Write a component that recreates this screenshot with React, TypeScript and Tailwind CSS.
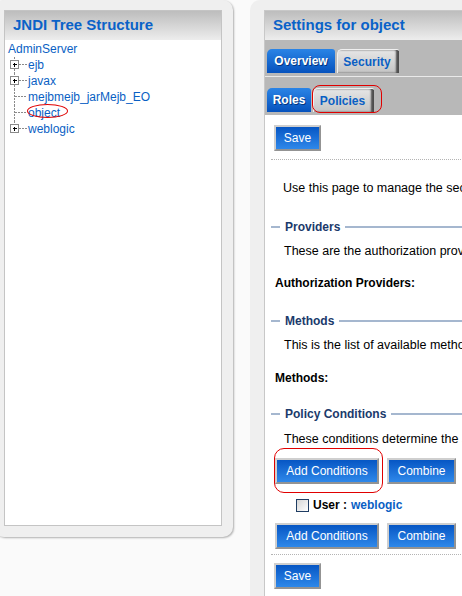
import React from 'react';

const font = "font-['Liberation_Sans',Arial,sans-serif]";

function TreeConnector({ plus, last }: { plus?: boolean; last?: boolean }) {
  return (
    <svg width="20" height="16" viewBox="0 0 20 16" shapeRendering="crispEdges" className="shrink-0">
      {plus ? (
        <>
          <line x1="6.5" y1="0" x2="6.5" y2="3" stroke="#8a8a8a" strokeDasharray="2 1" />
          {!last && <line x1="6.5" y1="12" x2="6.5" y2="16" stroke="#8a8a8a" strokeDasharray="2 1" />}
          <rect x="2.5" y="3.5" width="8" height="8" fill="#fff" stroke="#8a8a8a" />
          <line x1="4.5" y1="7.5" x2="9" y2="7.5" stroke="#000" />
          <line x1="6.5" y1="5.5" x2="6.5" y2="10" stroke="#000" />
          <line x1="11" y1="7.5" x2="19" y2="7.5" stroke="#8a8a8a" strokeDasharray="2 1" />
        </>
      ) : (
        <>
          <line x1="6.5" y1="0" x2="6.5" y2={last ? 8 : 16} stroke="#8a8a8a" strokeDasharray="2 1" />
          <line x1="7" y1="7.5" x2="19" y2="7.5" stroke="#8a8a8a" strokeDasharray="2 1" />
        </>
      )}
    </svg>
  );
}

function Btn({ label, w }: { label: string; w: string }) {
  return (
    <button
      className={`${w} h-[26px] shrink-0 border-2 border-t-[#cfcfcf] border-l-[#cfcfcf] border-r-[#939393] border-b-[#939393] bg-gradient-to-b from-[#0656c4] to-[#2e88ea] text-white text-[12px] leading-none`}
    >
      {label}
    </button>
  );
}

function Legend({ title }: { title: string }) {
  return (
    <div className="flex items-center h-[16px]">
      <div className="w-[9px] h-[2px] bg-[#a5b7cf]" />
      <span className="px-[5px] font-bold text-[12px] text-[#1b3a6b] whitespace-nowrap">{title}</span>
      <div className="flex-1 h-[2px] bg-[#a5b7cf]" />
    </div>
  );
}

function BlueTab({ label, w }: { label: string; w: string }) {
  return (
    <div
      className={`${w} h-[24px] flex items-center justify-center rounded-tl-[5px] rounded-tr-[3px] bg-gradient-to-b from-[#2a84e6] to-[#0652bd] text-white font-bold text-[12px] [text-shadow:1px_1px_0_#04367f]`}
    >
      {label}
    </div>
  );
}

function GreyTab({ label, w }: { label: string; w: string }) {
  return (
    <div
      className={`${w} h-[24px] flex items-center justify-center pr-[3px] rounded-tl-[5px] rounded-tr-[2px] border-l border-t border-[#f0f0f0] bg-gradient-to-b from-[#e6e6e6] to-[#c4c4c4] shadow-[inset_-3px_0_2px_#4d4d4d] text-[#0a5fc4] font-bold text-[12px]`}
    >
      {label}
    </div>
  );
}

export default function App() {
  const tree = [
    { label: 'ejb', plus: true },
    { label: 'javax', plus: true },
    { label: 'mejbmejb_jarMejb_EO' },
    { label: 'object' },
    { label: 'weblogic', plus: true, last: true },
  ];

  return (
    <div className={`relative w-[462px] h-[596px] overflow-hidden bg-[#fafafa] flex ${font}`}>
      {/* left panel */}
      <div className="shrink-0 -ml-[6px] w-[239px] h-[537px] rounded-[10px] bg-[#efefef] pt-[10px] pl-[10px] pr-[11px] shadow-[1px_1px_2px_rgba(0,0,0,0.3)]">
        <div className="h-[516px] bg-white border border-[#c4c4c4]">
          <div className="h-[29px] flex items-center pl-[8px] bg-gradient-to-b from-[#bdbdbd] to-[#ededed]">
            <span className="text-[15px] font-bold text-[#0a62c8]">JNDI Tree Structure</span>
          </div>
          <div className="pl-[3px] pt-[1px] text-[12px] leading-[16px] text-[#0a5fc4]">
            <div>AdminServer</div>
            {tree.map((t) => (
              <div key={t.label} className="flex items-center h-[16px]">
                <TreeConnector plus={t.plus} last={t.last} />
                <span>{t.label}</span>
              </div>
            ))}
          </div>
        </div>
      </div>

      {/* right panel */}
      <div className="shrink-0 ml-[17px] w-[300px] h-[620px] rounded-tl-[10px] bg-[#efefef] pt-[10px] pl-[14px]">
        <div className="h-[620px] bg-white border border-[#c8c8c8]">
          <div className="h-[29px] flex items-center pl-[8px] bg-gradient-to-b from-[#bdbdbd] to-[#ededed]">
            <span className="text-[15px] font-bold text-[#0a62c8] whitespace-nowrap">Settings for object</span>
          </div>
          <div className="h-[75px] bg-[#b8b8b8] pt-[9px]">
            <div className="flex gap-[2px] pl-[2px]">
              <BlueTab label="Overview" w="w-[68px]" />
              <GreyTab label="Security" w="w-[62px]" />
            </div>
            <div className="mt-[3px] h-[1px] bg-[#e9e9e9]" />
            <div className="flex gap-[2px] pl-[2px] mt-[11px]">
              <BlueTab label="Roles" w="w-[44px]" />
              <GreyTab label="Policies" w="w-[61px]" />
            </div>
          </div>

          <div className="pl-[6px] text-[12.5px] leading-[16px] text-black whitespace-nowrap">
            <div className="mt-[10px] pl-[3px]">
              <Btn label="Save" w="w-[47px]" />
            </div>
            <div className="mt-[8px] border-t border-dotted border-[#b4b4b4]" />
            <div className="mt-[20px] pl-[12px]">Use this page to manage the security policies for this object.</div>

            <div className="mt-[23px]"><Legend title="Providers" /></div>
            <div className="mt-[8px] pl-[13px]">These are the authorization providers configured in this realm.</div>
            <div className="mt-[16px] pl-[4px] font-bold text-[12px]">Authorization Providers:</div>

            <div className="mt-[22px]"><Legend title="Methods" /></div>
            <div className="mt-[8px] pl-[13px]">This is the list of available methods for this resource.</div>
            <div className="mt-[17px] pl-[4px] font-bold text-[12px]">Methods:</div>

            <div className="mt-[20px]"><Legend title="Policy Conditions" /></div>
            <div className="mt-[9px] pl-[13px]">These conditions determine the access control to the object.</div>

            <div className="mt-[11px] pl-[4px] flex gap-[8px]">
              <Btn label="Add Conditions" w="w-[104px]" />
              <Btn label="Combine" w="w-[69px]" />
            </div>
            <div className="mt-[13px] pl-[25px] flex items-center h-[16px] text-[12px] font-bold">
              <div className="w-[13px] h-[13px] border border-[#1f3d63] bg-gradient-to-br from-[#d6d6d6] to-white" />
              <span className="ml-[4px]">User :</span>
              <span className="ml-[4px] text-[#0a5fc4]">weblogic</span>
            </div>
            <div className="mt-[10px] pl-[4px] flex gap-[8px]">
              <Btn label="Add Conditions" w="w-[104px]" />
              <Btn label="Combine" w="w-[69px]" />
            </div>
            <div className="mt-[5px] border-t border-dotted border-[#b4b4b4]" />
            <div className="mt-[8px] pl-[3px]">
              <Btn label="Save" w="w-[47px]" />
            </div>
          </div>
        </div>
      </div>

      {/* red annotation marks */}
      <div className="absolute left-[27px] top-[104px] w-[41px] h-[14px] rounded-[50%] border border-[#e00000]" />
      <div className="absolute left-[312px] top-[85px] w-[70px] h-[28px] rounded-[8px] border border-[#e00000]" />
      <div className="absolute left-[274px] top-[448px] w-[109px] h-[45px] rounded-[10px] border border-[#e00000]" />
    </div>
  );
}
